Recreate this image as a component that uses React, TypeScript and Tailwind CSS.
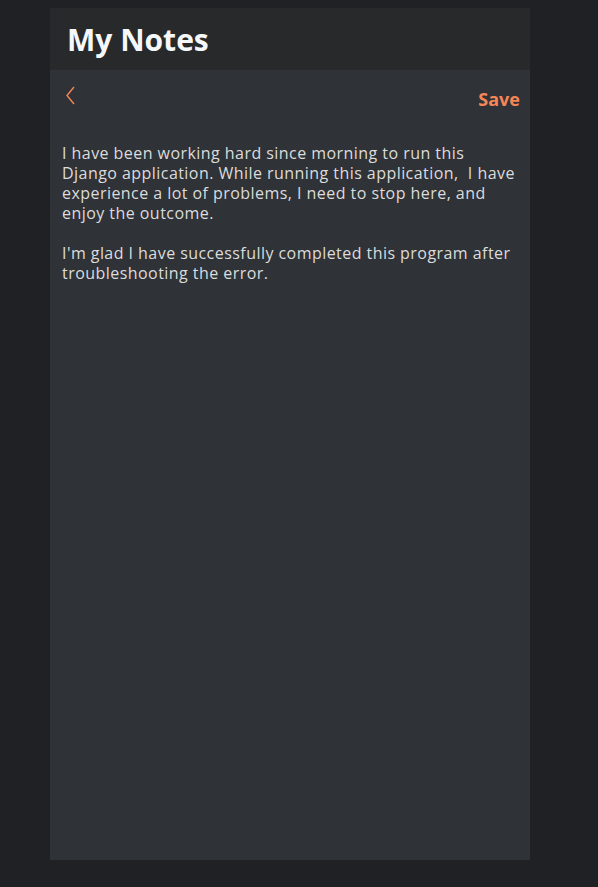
import { useState } from 'react'

export default function App() {
  const [body, setBody] = useState(
    "I have been working hard since morning to run this Django application. While running this application,  I have experience a lot of problems, I need to stop here, and enjoy the outcome.\n\nI'm glad I have successfully completed this program after troubleshooting the error."
  )

  return (
    <div className="min-h-screen bg-[#202124] pt-2 pb-[27px]" style={{ fontFamily: '"Open Sans", sans-serif' }}>
      <div className="ml-[50px] flex h-[852px] w-[480px] flex-col bg-[#2f3236]">
        {/* header */}
        <div className="flex h-[62px] items-center bg-[#28292b] pl-[17px]">
          <h1 className="text-[30px] font-bold text-[#f5f7fa]">My Notes</h1>
        </div>

        {/* actions */}
        <div className="flex items-start justify-between pl-[12px] pr-[10px] pt-[14px]">
          <button className="text-[#f68657]">
            <svg width="16" height="24" viewBox="0 0 16 24" fill="none" stroke="currentColor" strokeWidth="1.4">
              <path d="M12 3 L5 11.5 L12 20" />
            </svg>
          </button>
          <button className="mt-[2px] text-[18px] font-bold text-[#f68657]">Save</button>
        </div>

        {/* note body */}
        <textarea
          value={body}
          onChange={(e) => setBody(e.target.value)}
          className="mt-[30px] flex-1 resize-none bg-transparent px-3 text-[16px] font-medium leading-[20px] tracking-[0.45px] text-[#dcdcdc] outline-none"
        />
      </div>
    </div>
  )
}
